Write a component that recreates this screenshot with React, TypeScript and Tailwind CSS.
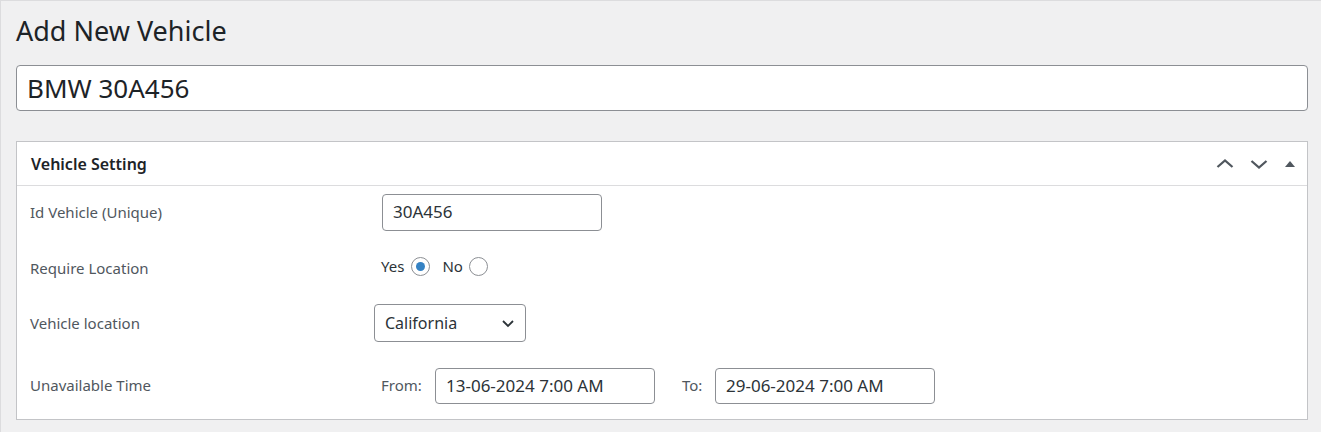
import React from "react";

const font = { fontFamily: '"Noto Sans", "Open Sans", sans-serif' };

function Radio({ checked }: { checked?: boolean }) {
  return (
    <span className="inline-flex h-[19px] w-[19px] items-center justify-center rounded-full border border-[#8c8f94] bg-white">
      {checked && <span className="h-[9px] w-[9px] rounded-full bg-[#3582c4]" />}
    </span>
  );
}

export default function App() {
  return (
    <div className="h-[432px] w-[1321px] overflow-hidden border-l border-t border-[#dcdcde] bg-[#f0f0f1] text-[#1d2327]" style={font}>
      <div className="pl-[15px] pr-[13px]">
        <h1 className="pt-[11px] text-[27px] leading-[37px] font-normal text-[#1d2327]">Add New Vehicle</h1>
        <div className="mt-[16px] flex h-[46px] items-center rounded-[4px] border border-[#8c8f94] bg-white px-[10px] text-[26px] text-[#1d2327]">
          BMW 30A456
        </div>
        <div className="mt-[30px] border border-[#c3c4c7] bg-white">
          <div className="flex h-[44px] items-center justify-between border-b border-[#dcdcde] pl-[14px] pr-[10px]">
            <span className="text-[16px] font-semibold text-[#1d2327]">Vehicle Setting</span>
            <div className="flex items-center gap-[14px] text-[#50575e]">
              <svg width="20" height="20" viewBox="0 0 20 20" fill="none" stroke="currentColor" strokeWidth="2.3">
                <path d="M2.5 13 L10 6.5 L17.5 13" />
              </svg>
              <svg width="20" height="20" viewBox="0 0 20 20" fill="none" stroke="currentColor" strokeWidth="2.3">
                <path d="M2.5 7 L10 13.5 L17.5 7" />
              </svg>
              <svg width="14" height="14" viewBox="0 0 14 14" fill="currentColor">
                <path d="M2 10 L7 4 L12 10 Z" />
              </svg>
            </div>
          </div>
          <div className="text-[15px] text-[#50575e]">
            <div className="flex h-[52px] items-center">
              <div className="w-[365px] pl-[13px]">Id Vehicle (Unique)</div>
              <div className="flex h-[37px] w-[220px] items-center rounded-[4px] border border-[#8c8f94] px-[10px] text-[17px] text-[#2c3338]">30A456</div>
            </div>
            <div className="flex h-[56px] items-center">
              <div className="w-[364px] pl-[13px] pt-[4px]">Require Location</div>
              <div className="flex items-center text-[15px] text-[#2c3338]">
                <span className="mr-[7px]">Yes</span>
                <Radio checked />
                <span className="ml-[12px] mr-[6px]">No</span>
                <Radio />
              </div>
            </div>
            <div className="flex h-[58px] items-center">
              <div className="w-[357px] pl-[13px]">Vehicle location</div>
              <div className="flex h-[38px] w-[152px] items-center justify-between rounded-[4px] border border-[#8c8f94] pl-[10px] pr-[10px] text-[16px] text-[#2c3338]">
                <span>California</span>
                <svg width="14" height="14" viewBox="0 0 14 14" fill="none" stroke="#2c3338" strokeWidth="1.8">
                  <path d="M2 5 L7 10 L12 5" />
                </svg>
              </div>
            </div>
            <div className="flex h-[67px] items-center">
              <div className="w-[364px] pl-[13px]">Unavailable Time</div>
              <span className="w-[54px] text-[15px] text-[#50575e]">From:</span>
              <div className="flex h-[36px] w-[220px] items-center rounded-[4px] border border-[#8c8f94] px-[10px] text-[17px] text-[#2c3338]">13-06-2024 7:00 AM</div>
              <span className="ml-[27px] w-[33px] text-[15px] text-[#50575e]">To:</span>
              <div className="flex h-[36px] w-[220px] items-center rounded-[4px] border border-[#8c8f94] px-[10px] text-[17px] text-[#2c3338]">29-06-2024 7:00 AM</div>
            </div>
          </div>
        </div>
      </div>
    </div>
  );
}
